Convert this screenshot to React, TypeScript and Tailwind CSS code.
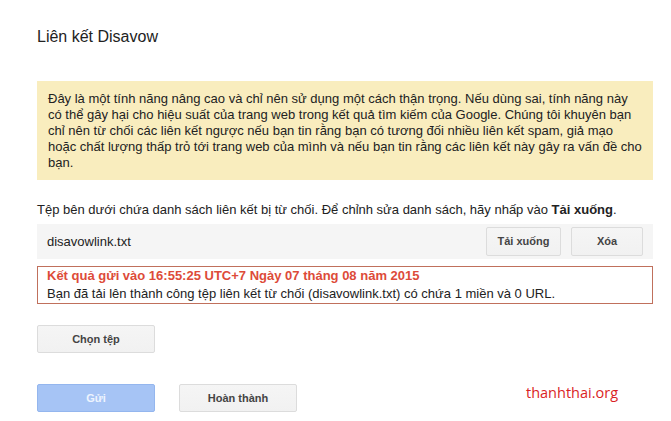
import React from "react";

const btn =
  "h-[29px] rounded-[2px] border border-[#dcdcdc] bg-gradient-to-b from-[#f5f5f5] to-[#f1f1f1] text-[11px] font-bold text-[#444] flex items-center justify-center";

export default function App() {
  return (
    <div
      className="w-[671px] h-[421px] bg-white text-[#222] overflow-hidden"
      style={{ fontFamily: '"Liberation Sans", Arial, sans-serif' }}
    >
      <div className="pl-[37px] pt-[27px] w-[653px]">
        <h1 className="text-[16px] leading-[20px] font-normal text-[#222]">Liên kết Disavow</h1>

        <div className="mt-[34px] bg-[#f9edbe] pl-[11px] pr-[10px] pt-[10px] pb-[9px] text-[13px] leading-[16px] text-[#222]">
          Đây là một tính năng nâng cao và chỉ nên sử dụng một cách thận trọng. Nếu dùng sai, tính năng này
          có thể gây hại cho hiệu suất của trang web trong kết quả tìm kiếm của Google. Chúng tôi khuyên bạn
          chỉ nên từ chối các liên kết ngược nếu bạn tin rằng bạn có tương đối nhiều liên kết spam, giả mạo
          hoặc chất lượng thấp trỏ tới trang web của mình và nếu bạn tin rằng các liên kết này gây ra vấn đề cho
          bạn.
        </div>

        <p className="mt-[22px] text-[13px] leading-[16px] text-[#222]">
          Tệp bên dưới chứa danh sách liên kết bị từ chối. Để chỉnh sửa danh sách, hãy nhấp vào{" "}
          <span className="font-bold">Tải xuống</span>.
        </p>

        <div className="mt-[6px] h-[35px] bg-[#f5f5f5] flex items-center pl-[10px] pr-[10px]">
          <span className="text-[13px] text-[#222] flex-1">disavowlink.txt</span>
          <div className="flex gap-[10px]">
            <button className={`${btn} w-[75px]`}>Tải xuống</button>
            <button className={`${btn} w-[72px]`}>Xóa</button>
          </div>
        </div>

        <div className="mt-[7px] border border-[#c0705c] pl-[9px] text-[13px] leading-[18px]">
          <div className="font-bold text-[#dd4b39]">Kết quả gửi vào 16:55:25 UTC+7 Ngày 07 tháng 08 năm 2015</div>
          <div className="text-[#222]">Bạn đã tải lên thành công tệp liên kết từ chối (disavowlink.txt) có chứa 1 miền và 0 URL.</div>
        </div>

        <div className="mt-[21px] h-[28px] w-[118px] rounded-[2px] border border-[#dcdcdc] bg-gradient-to-b from-[#f5f5f5] to-[#f1f1f1] text-[11px] font-bold text-[#444] flex items-center justify-center">
          Chọn tệp
        </div>

        <div className="mt-[31px] flex items-start">
          <div className="h-[28px] w-[118px] rounded-[2px] border border-[#94b6ee] bg-[#a6c4f5] text-[11px] font-bold text-[#eef4fe] flex items-center justify-center">
            Gửi
          </div>
          <div className="ml-[24px] h-[28px] w-[118px] rounded-[2px] border border-[#dcdcdc] bg-gradient-to-b from-[#f5f5f5] to-[#f1f1f1] text-[11px] font-bold text-[#444] flex items-center justify-center">
            Hoàn thành
          </div>
          <span
            className="ml-[229px] -mt-[1px] text-[14.5px] leading-[20px] text-[#da1f26]"
            style={{ fontFamily: '"Open Sans", sans-serif' }}
          >
            thanhthai.org
          </span>
        </div>
      </div>
    </div>
  );
}
